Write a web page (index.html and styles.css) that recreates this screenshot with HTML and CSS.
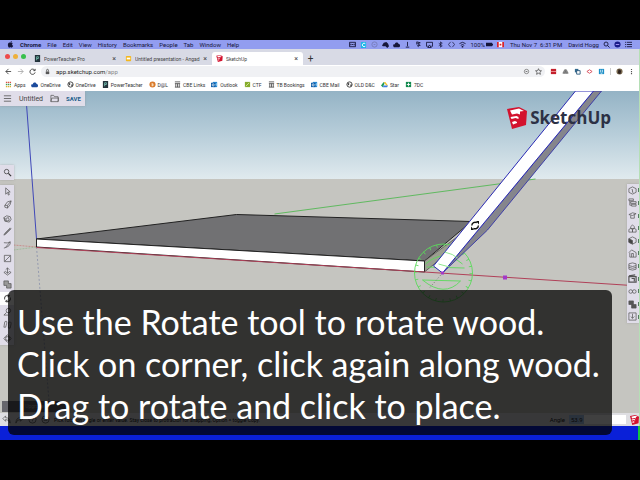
FILE: index.html
```html
<!DOCTYPE html>
<html lang="en">
<head>
<meta charset="utf-8">
<title>SketchUp</title>
<link rel="stylesheet" href="styles.css">
</head>
<body>
<svg class="defs" aria-hidden="true">
  <defs>
    <symbol id="globe" viewBox="0 0 8 8"><circle cx="4" cy="4" r="3" fill="#fff" stroke="#333"/><path d="M2 2l2 1-1 2-1-1zM5 4l2 0-1 2-1 0z" fill="#333"/></symbol>
    <symbol id="outlook" viewBox="0 0 8 8"><path d="M2 1h5v6H2z" fill="#2a8ad4"/><path d="M4 4l3-2v4z" fill="#7cc3f0"/><path d="M0 2h5v5H0z" fill="#0f5ea8"/><circle cx="2.500" cy="4.500" r="1.200" fill="none" stroke="#fff" stroke-width=".8"/></symbol>
    <symbol id="power" viewBox="0 0 8 8"><path d="M1 0h6v8H1z" fill="#24333c"/><path d="M3 6V2h2v2H3" fill="none" stroke="#6fb7a8"/></symbol>
    <symbol id="bank" viewBox="0 0 8 8"><path d="M1 1h6M1 3h6M2 3v4M4 3v4M6 3v4M1 7h6" fill="none" stroke="#555"/></symbol>
    <symbol id="brand" viewBox="0 0 20 22"><path d="M0 2L12 0l8 4-1 14L5 22z" fill="#d3122e"/><path d="M3 3.500L12 1.500l5 2.500-4 .5v3l-3-1L5 7.500z" fill="#fff"/><path d="M3.500 10l6-1 2 1v2l-3-1-4 1zM5 15l3-1 2 1v1l-4 1.500z" fill="#fff"/></symbol>
  </defs>
</svg>
<div class="screen">
  <header class="menubar">
    <nav class="menus">
      <svg class="glyph" viewBox="0 0 8 8"><path d="M4 2C2 1 1 3 1 4.500 1 6 2 8 3 7.500c1-.4 1-.4 2 0C6 8 7 6 7 5.500 5.500 5 5.500 3.500 6.600 2.700 6 1.700 5 1.700 4 2zM4 1.600C4 .8 4.600 0 5.400 0c0 1-.6 1.600-1.400 1.600z" fill="#16163a"/></svg>
      <b>Chrome</b><span>File</span><span>Edit</span><span>View</span><span>History</span><span>Bookmarks</span><span>People</span><span>Tab</span><span>Window</span><span>Help</span>
    </nav>
    <div class="extras">
      <svg class="glyph" viewBox="0 0 8 8"><path d="M.5 1.500h7v5h-7zM3 4h2M2 3v2M6 3v2" fill="none" stroke="#16163a"/></svg>
      <svg class="glyph" viewBox="0 0 8 8"><rect x="1" y="1" width="6" height="7" rx="1" fill="#1cb6e8"/><path d="M6 3a2 2 0 1 0 0 3" fill="none" stroke="#fff"/></svg>
      <svg class="glyph" viewBox="0 0 8 8"><circle cx="4" cy="4" r="3" fill="none" stroke="#777bb8"/><path d="M3 4h2" stroke="#777bb8"/></svg>
      <svg class="glyph" viewBox="0 0 8 8"><path d="M0 5l2-3 3-1 2 2 1 3-2 2-2-2H1z" fill="#16163a"/></svg>
      <svg class="glyph" viewBox="0 0 8 8"><path d="M1 7C-1 5 1 3 2 4c0-3 4-3 4-1 2 0 3 3 1 4z" fill="#16163a"/></svg>
      <svg class="glyph" viewBox="0 0 8 8"><path d="M4 1v5M2 7h4" stroke="#16163a" fill="none"/></svg>
      <svg class="glyph" viewBox="0 0 8 8"><path d="M2 1l4 1-3 1 3 2-3 0 1 2M2 1v3" stroke="#16163a" fill="none"/></svg>
      <svg class="glyph" viewBox="0 0 8 8"><path d="M2 6H.5V1.500h7V6H6M4 4.500L6 7.500H2z" stroke="#16163a" fill="none"/></svg>
      <svg class="glyph" viewBox="0 0 8 8"><path d="M2 2.500l4 3L4 7V1l2 1.500-4 3" stroke="#16163a" fill="none" stroke-width=".8"/></svg>
      <svg class="glyph" viewBox="0 0 8 8"><path d="M3 1L.5 4 3 7M5 1l2.500 3L5 7" stroke="#16163a" fill="none" stroke-width=".8"/></svg>
      <svg class="glyph" viewBox="0 0 8 8"><path d="M.5 3q3.500-3 7 0M2 5q2-2 4 0" stroke="#16163a" fill="none"/><circle cx="4" cy="6.500" r="1" fill="#16163a"/></svg>
      <span class="battery">100%<svg class="glyph" viewBox="0 0 8 8"><path d="M0 2h7v4H0zM7 3h1v2H7z" fill="#16163a"/></svg></span>
      <svg class="glyph" viewBox="0 0 8 8"><path d="M0 1h8v6H0z" fill="#fff"/><path d="M0 1h2v6H0zM6 1h2v6H6zM3 3h2v2H3z" fill="#d9232e"/></svg>
      <span class="clock">Thu Nov 7&nbsp; 6:31 PM</span><span>David Hogg</span>
      <svg class="glyph" viewBox="0 0 8 8"><circle cx="3.500" cy="3.500" r="2.300" stroke="#16163a" fill="none"/><path d="M5 5l2.500 2.500" stroke="#16163a"/></svg>
      <svg class="glyph" viewBox="0 0 8 8"><circle cx="4" cy="4" r="3.500" fill="#1a1c8a"/><path d="M2 4h4" stroke="#b0a0ff"/></svg>
      <svg class="glyph" viewBox="0 0 8 8"><path d="M0 1.500h1M2 1.500h6M0 4h1M2 4h6M0 6.500h1M2 6.500h6" stroke="#16163a"/></svg>
    </div>
  </header>

  <section class="browser">
    <div class="tabs">
      <div class="lights"><i class="red"></i><i class="amber"></i><i class="green"></i></div>
      <div class="tab"><svg class="glyph"><use href="#power"/></svg><span>PowerTeacher Pro</span><button aria-label="Close tab">×</button></div>
      <div class="tab"><svg class="glyph" viewBox="0 0 8 8"><rect x="1" y="1" width="6" height="6" rx="1" fill="#f4b71e"/><path d="M2 3h4v2H2z" fill="#fff"/></svg><span>Untitled presentation - Angad S</span><button aria-label="Close tab">×</button></div>
      <div class="tab current"><svg class="glyph"><use href="#brand"/></svg><span>SketchUp</span><button aria-label="Close tab">×</button></div>
      <button class="plus" aria-label="New tab">+</button>
    </div>
    <div class="address">
      <button aria-label="Back"><svg class="glyph" viewBox="0 0 8 8"><path d="M7 4H1M4 1L1 4l3 3" stroke="#444" fill="none"/></svg></button>
      <button aria-label="Forward"><svg class="glyph" viewBox="0 0 8 8"><path d="M1 4h6M4 1l3 3-3 3" stroke="#aaa" fill="none"/></svg></button>
      <button aria-label="Reload"><svg class="glyph" viewBox="0 0 8 8"><path d="M6.500 2.500A3 3 0 1 0 7 5M7 1v2H5" stroke="#333" fill="none"/></svg></button>
      <div class="urlbox">
        <svg class="glyph" viewBox="0 0 8 8"><path d="M2 4h4v3H2z" fill="#555"/><path d="M3 4V2.500a1 1 0 0 1 2 0V4" stroke="#555" fill="none"/></svg>
        <span class="url">app.sketchup.com<em>/app</em></span>
        <svg class="glyph" viewBox="0 0 8 8"><circle cx="4" cy="4" r="2.500" stroke="#666" fill="none" stroke-width=".8"/><path d="M3 4h2" stroke="#666"/></svg>
        <svg class="glyph" viewBox="0 0 8 8"><path d="M4 .8l1 2.200 2.400.2-1.800 1.600.6 2.400L4 6 1.800 7.200l.6-2.400L.6 3.200 3 3z" stroke="#444" fill="none" stroke-width=".8"/></svg>
      </div>
      <div class="extensions">
        <svg class="glyph" viewBox="0 0 8 8"><path d="M1 1h6v6H1z" fill="#c4202d"/><path d="M1 4h6" stroke="#e99"/></svg>
        <svg class="glyph" viewBox="0 0 8 8"><path d="M1 6l2-4h2l2 4zM3 6l1-3 1 3" fill="#999" stroke="#666" stroke-width=".8"/></svg>
        <svg class="glyph" viewBox="0 0 8 8"><path d="M1 1h4v4H1z" fill="#31688d"/><path d="M3 3h4v4H3z" fill="#fff" stroke="#25567c"/></svg>
        <svg class="glyph" viewBox="0 0 8 8"><path d="M1 4l3-2 3 2-3 2z" fill="#fff" stroke="#d64552"/></svg>
        <svg class="glyph" viewBox="0 0 8 8"><path d="M1 1h6v6H1z" fill="#1e90c8"/><path d="M3 2v3M5 2v3M3 6h2" stroke="#fff" stroke-width=".8"/></svg>
        <i class="rule"></i>
        <svg class="glyph" viewBox="0 0 8 8"><circle cx="4" cy="4" r="3.500" fill="#7a6a50"/><path d="M3 1l3 2-1 4-3-1z" fill="#30241e"/></svg>
        <svg class="glyph" viewBox="0 0 8 8"><path d="M4 1v1.400M4 3.400v1.400M4 5.800v1.400" stroke="#555" stroke-width="1.300"/></svg>
      </div>
    </div>
    <nav class="bookmarks">
      <a href="#"><svg class="glyph" viewBox="0 0 8 8"><path d="M1 1.500h6" stroke="#d95040" stroke-width="1.500" stroke-dasharray="1.500 .7"/><path d="M1 4h6" stroke="#4a9a55" stroke-width="1.500" stroke-dasharray="1.500 .7"/><path d="M1 6.500h6" stroke="#e0b030" stroke-width="1.500" stroke-dasharray="1.500 .7"/></svg>Apps</a>
      <a href="#"><svg class="glyph" viewBox="0 0 8 8"><path d="M1 7C-1 5 1 3 2 4c0-3 4-3 4-1 2 0 3 3 1 4z" fill="#1b4a9c"/></svg>OneDrive</a>
      <a href="#"><svg class="glyph"><use href="#globe"/></svg>OneDrive</a>
      <a href="#"><svg class="glyph"><use href="#power"/></svg>PowerTeacher</a>
      <a href="#"><svg class="glyph" viewBox="0 0 8 8"><circle cx="4" cy="4" r="3.500" fill="#d97a2b"/><path d="M3 2v4q3 0 2-3z" fill="#f8d9b5"/></svg>D@L</a>
      <a href="#"><svg class="glyph"><use href="#bank"/></svg>CBE Links</a>
      <a href="#"><svg class="glyph"><use href="#outlook"/></svg>Outlook</a>
      <a href="#"><svg class="glyph" viewBox="0 0 8 8"><path d="M1 1h6v6H1z" fill="#86ac2c"/><path d="M2 6l4-4" stroke="#d8e8a0"/></svg>CTF</a>
      <a href="#"><svg class="glyph"><use href="#bank"/></svg>TB Bookings</a>
      <a href="#"><svg class="glyph"><use href="#outlook"/></svg>CBE Mail</a>
      <a href="#"><svg class="glyph"><use href="#globe"/></svg>OLD D&amp;C</a>
      <a href="#"><svg class="glyph" viewBox="0 0 8 8"><path d="M3 1h2l3 4H6z" fill="#f5c32c"/><path d="M3 1l1 2-2 4-2-2z" fill="#209a5c"/><path d="M3 5h5L7 7H2z" fill="#3d7de0"/></svg>Star</a>
      <a href="#"><svg class="glyph" viewBox="0 0 8 8"><path d="M1 1h6v6H1z" fill="#128a4e"/><path d="M2 4h4M4 2v4" stroke="#fff"/></svg>7DC</a>
    </nav>

    <main class="app">
      <svg class="scene" viewBox="0 91 640 322" preserveAspectRatio="xMidYMid slice" aria-label="Model">
        <defs><linearGradient id="sky" x1="0" y1="0" x2="0" y2="1"><stop offset="0" stop-color="#94b3c5"/><stop offset=".5" stop-color="#b8ceda"/><stop offset="1" stop-color="#e0eaee"/></linearGradient></defs>
        <path d="M0 91h640v88H0z" fill="url(#sky)"/>
        <path d="M0 179h640v234H0z" fill="#c5c5c0"/>
        <path d="M26 91L37 239" stroke="#4048b8" fill="none"/>
        <path d="M37 247l13 160" stroke="#8088a8" stroke-dasharray="2 2" fill="none" stroke-width=".7"/>
        <path d="M14 245l23 2" stroke="#c87878" stroke-dasharray="2 1" stroke-width=".7"/>
        <path d="M14 250l23-3" stroke="#8fb88f" stroke-dasharray="2 1" stroke-width=".7"/>
        <path d="M275 214l261-35" stroke="#55b855" stroke-width=".9"/>
        <path d="M37 239L237 214.500 472 221.500 425 261z" fill="#717173" stroke="#222"/>
        <path d="M425 261l34-25v8l-34 28z" fill="#9b9e90" stroke="#444" stroke-width=".7"/>
        <path d="M37 239l388 22v11L37 247z" fill="#fff" stroke="#222"/>
        <path d="M37 247.500l388 24.500 215 14" stroke="#b04058" fill="none"/>
        <g fill="none" stroke="#5bd95b" stroke-width=".9">
          <circle cx="444" cy="273" r="29"/>
          <circle cx="444" cy="273" r="27.500" stroke-dasharray=".8 6.400" stroke-width="3"/>
          <path d="M426 264q18-16 37 0M423 280l38 1q-16 17-38-1M427 267l38 1"/>
        </g>
        <path d="M594 91h8L488 230l-45 43z" fill="#85858c" stroke="#3434a8" stroke-width=".9"/>
        <path d="M576 91h18L443 273l-9-7z" fill="#fff" stroke="#2a2ab4"/>
        <path d="M439 264l11 3M445 252q9 2 13 6" stroke="#8fe88f" fill="none"/>
        <path d="M443 273l-13 15" stroke="#777" stroke-dasharray="1 2"/>
        <path d="M503.500 275.500h4v4h-4zM441.500 271.500h3v3h-3z" fill="#a338c8"/>
        <path d="M472.300 225.500a3.300 3.300 0 0 1 5-2.800M478.900 225.500a3.300 3.300 0 0 1-5 2.800" fill="none" stroke="#111" stroke-width="1.400"/>
        <path d="M476.500 221h3v3.500zM474.500 230h-3v-3.500z" fill="#111"/>
      </svg>
      <div class="logo"><svg viewBox="0 0 20 22"><use href="#brand"/></svg><span>SketchUp</span></div>
      <div class="filebar">
        <button aria-label="Menu"><svg class="icon" viewBox="0 0 10 10"><path d="M1 2h8M1 5h8M1 8h8" stroke="#555" stroke-width=".9"/></svg></button>
        <span class="title">Untitled</span>
        <button aria-label="Open"><svg class="icon" viewBox="0 0 10 10"><path d="M1 8.500v-7h3l1 1.500h4v5.500zM1 8.500l1-4h8l-1 4" fill="none" stroke="#555" stroke-width=".8"/></svg></button>
        <button class="save">SAVE</button>
      </div>
      <div class="search"><button aria-label="Search"><svg class="icon" viewBox="0 0 10 10"><circle cx="4" cy="4" r="2.500" fill="none" stroke="#333"/><path d="M6 6l3 3" stroke="#333" stroke-width="1.300"/></svg></button></div>
      <div class="tools">
        <button aria-label="Select"><svg class="icon" viewBox="0 0 10 10"><path d="M3 1v7l2-2 1 3 1-.5L6 5.500h2z"/></svg></button>
        <button aria-label="Eraser"><svg class="icon" viewBox="0 0 10 10"><path d="M2 6l3-4 4-1-1 4-3 4-3-1zM2 6l3 0 4-5M5 6v3"/></svg></button>
        <button aria-label="Paint"><svg class="icon" viewBox="0 0 10 10"><path d="M1 4l3-2 4 1 1 3-2 3-5-1zM3 5l3-1 1 3-3 1zM1 4l2 4"/></svg></button>
        <button aria-label="Line"><svg class="icon" viewBox="0 0 10 10"><path d="M1 9l1-2 6-6 1 1-6 6zM2 8l6-6"/></svg></button>
        <button aria-label="Arc"><svg class="icon" viewBox="0 0 10 10"><path d="M1 3q4 1 7-1 1 5-7 7M3 8l5-6"/></svg></button>
        <button aria-label="Rectangle"><svg class="icon" viewBox="0 0 10 10"><path d="M1.500 1.500h7v7h-7zM2 8l6-6"/></svg></button>
        <button aria-label="Push pull"><svg class="icon" viewBox="0 0 10 10"><path d="M3 5L1 6l4 3 4-3-2-1M5 7V1M3 3l2-2 2 2M3 5l2 2 2-2"/></svg></button>
        <button aria-label="Offset"><svg class="icon" viewBox="0 0 10 10"><path d="M1 1h5v3h3v5H4V6H1z" fill="#999"/></svg></button>
        <button class="active" aria-label="Rotate"><svg class="icon" viewBox="0 0 10 10"><path d="M2 6a3 3 0 0 1 4-4M8 4a3 3 0 0 1-4 4M5 .8L7 2 5 3.500M5 9.200L3 8l2-1.500" stroke-width="1.200"/></svg></button>
        <button aria-label="Tape"><svg class="icon" viewBox="0 0 10 10"><circle cx="6" cy="4" r="2.500"/><path d="M4 6L1 9h5"/></svg></button>
        <button aria-label="Walk"><svg class="icon" viewBox="0 0 10 10"><path d="M2 2q3-2 2 2l-1 4H1zM6 3q3-2 3 1L8 9H6z"/></svg></button>
        <button aria-label="Orbit"><svg class="icon" viewBox="0 0 10 10"><ellipse cx="5" cy="5" rx="4" ry="2"/><ellipse cx="5" cy="5" rx="2" ry="4"/></svg></button>
      </div>
      <div class="panels">
        <button aria-label="Entity info"><svg class="icon" viewBox="0 0 10 10"><path d="M5 1l4 2v4L5 9 1 7V3zM4 4h1v3h1"/></svg></button>
        <button aria-label="Instructor"><svg class="icon" viewBox="0 0 10 10"><path d="M1 1h5v2H1zM3 4h6v2H3zM4 7h5v2H4zM2 3v5h2"/></svg></button>
        <button aria-label="Materials"><svg class="icon" viewBox="0 0 10 10"><path d="M1 4l4-2 4 1-4 2zM3 5v3l4 0V4"/></svg></button>
        <button aria-label="Components"><svg class="icon" viewBox="0 0 10 10"><path d="M3 3l2-2 2 2v2H3zM1 6l2-1 2 1v3H1zM5 6l2-1 2 1v3H5z"/></svg></button>
        <button aria-label="Styles"><svg class="icon" viewBox="0 0 10 10"><path d="M5 1l4 2v4L5 9 1 7V3z"/><path d="M1 3l4 2v4L1 7z" fill="#444"/></svg></button>
        <button aria-label="Views"><svg class="icon" viewBox="0 0 10 10"><path d="M1 4l3-3 5 3v5H2V4M4 9V5h2v4"/></svg></button>
        <button aria-label="Layers"><svg class="icon" viewBox="0 0 10 10"><path d="M1 2l4-1 4 1v6L5 9 1 8zM1 4l4 1 4-1M1 6l4 1 4-1"/></svg></button>
        <button aria-label="Scenes"><svg class="icon" viewBox="0 0 10 10"><path d="M1 3h8v6H1zM1 2l7-1M4 5h3v3" stroke-width="1.300"/></svg></button>
        <button aria-label="Display"><svg class="icon" viewBox="0 0 10 10"><circle cx="3" cy="5" r="2"/><circle cx="7" cy="5" r="2"/></svg></button>
        <button aria-label="Soften"><svg class="icon" viewBox="0 0 10 10"><path d="M1 1h5v4H1zM4 5h5v4H4z" fill="#555"/></svg></button>
        <button aria-label="Model info"><svg class="icon" viewBox="0 0 10 10"><path d="M1 1h8v8H1zM5 2v5M3 5l2 2 2-2"/></svg></button>
      </div>
      <div class="toast">Upgrade</div>
    </main>

    <footer class="status">
      <button aria-label="Undo"><svg class="icon" viewBox="0 0 10 10"><path d="M4 1L1 4l3 3V5q4 0 5 4 0-6-5-6z"/></svg></button>
      <button aria-label="Redo"><svg class="icon" viewBox="0 0 10 10"><path d="M6 1l3 3-3 3V5Q2 5 1 9q0-6 5-6z"/></svg></button>
      <button aria-label="Help"><svg class="icon" viewBox="0 0 10 10"><circle cx="5" cy="5" r="4"/><path d="M4 4q1-2 2 0L5 6v1"/></svg></button>
      <button aria-label="Language"><svg class="icon" viewBox="0 0 10 10"><circle cx="5" cy="5" r="4"/><path d="M1 4h8M3 6h4"/></svg></button>
      <span class="hint">Pick rotation angle or enter value. Stay close to protractor for snapping, Option = toggle Copy.</span>
      <label for="angle">Angle</label>
      <input id="angle" value="53.9">
      <svg class="badge" viewBox="0 0 20 22"><use href="#brand"/></svg>
    </footer>
  </section>
  <p class="caption">Use the Rotate tool to rotate wood.<br>Click on corner, click again along wood.<br>Drag to rotate and click to place.</p>
</div>
</body>
</html>
```
FILE: styles.css
```css
* { box-sizing: border-box; }
body {
  margin: 0;
  min-height: 100vh;
  padding: 40px 0;
  background: #000;
  color: #333;
  font: 6px/8px Roboto, "Liberation Sans", sans-serif;
  display: flex;
  flex-direction: column;
}
button {
  border: 0;
  padding: 0;
  background: none;
  color: inherit;
  font: inherit;
  display: flex;
  align-items: center;
  justify-content: center;
}
a { color: inherit; text-decoration: none; }
.defs { position: absolute; width: 0; height: 0; }
.glyph { width: 7px; height: 7px; flex: none; display: block; }
.icon { width: 9px; height: 9px; flex: none; display: block; fill: none; stroke: #555; stroke-width: .8px; }

.screen {
  flex: 1;
  position: relative;
  display: flex;
  flex-direction: column;
  background: linear-gradient(to left, #14c83c 2px, #0a20d8 2px);
  padding-bottom: 14px;
}
.menubar {
  display: flex;
  justify-content: space-between;
  height: 9px;
  padding: 0 8px 0 7px;
  background: #929df0;
  color: #16163a;
}
.menus, .extras { display: flex; align-items: center; gap: 6px; }
.extras { gap: 4px; }
.battery { display: flex; gap: 1px; }
.clock { padding: 0 2px; }

.browser {
  flex: 1;
  display: flex;
  flex-direction: column;
  background: #d8dae5;
  border-right: 1px solid #b5dfb5;
}
.tabs {
  display: flex;
  align-items: flex-end;
  height: 16px;
  font-size: 5px;
}
.lights { display: flex; gap: 3px; width: 30px; padding: 0 0 6px 5px; }
.lights i { width: 5px; height: 5px; border-radius: 50%; }
.red { background: #ee4b4b; }
.amber { background: #eeb03a; }
.green { background: #38c04c; }
.tab {
  flex: 0 0 91px;
  min-width: 0;
  display: flex;
  align-items: center;
  gap: 3px;
  height: 13px;
  padding: 0 5px 0 4px;
  color: #444;
}
.tab span { flex: 1; overflow: hidden; white-space: nowrap; }
.tab button { font-size: 7px; }
.current { background: #fff; border-radius: 3px 3px 0 0; }
.plus { width: 15px; height: 13px; font-size: 10px; }
.address {
  display: flex;
  align-items: center;
  gap: 5px;
  height: 13px;
  padding: 0 4px 0 5px;
  background: #fff;
}
.urlbox {
  flex: 1;
  display: flex;
  align-items: center;
  gap: 5px;
  height: 11px;
  padding: 0 3px;
  border-radius: 6px;
  background: #f0f1f4;
}
.url { flex: 1; color: #222; }
.url em { font-style: normal; color: #888; }
.extensions { display: flex; align-items: center; gap: 5px; }
.rule { width: 1px; height: 7px; background: #ccc; }
.bookmarks {
  display: flex;
  align-items: center;
  gap: 6px;
  height: 13px;
  padding-left: 5px;
  background: #fff;
  font-size: 5px;
}
.bookmarks a { display: flex; align-items: center; gap: 2px; white-space: nowrap; }

.app { flex: 1; position: relative; overflow: hidden; background: #c5c5c0; }
.scene { position: absolute; inset: 0; width: 100%; height: 100%; }
.logo {
  position: absolute;
  top: 15px;
  right: 28px;
  display: flex;
  align-items: center;
  gap: 3px;
  color: #2c3145;
  font: bold 17px/24px "Open Sans", sans-serif;
}
.logo svg { width: 20px; height: 22px; }
.filebar, .search, .tools, .panels { position: absolute; background: #e0dde9; box-shadow: 0 0 2px #8888; }
.filebar {
  top: 0;
  left: 0;
  display: flex;
  align-items: center;
  gap: 7px;
  height: 15px;
  padding: 0 4px 0 3px;
}
.title { font-size: 7px; color: #444; }
.save { color: #1c5d8c; font-weight: bold; }
.search { top: 74px; left: 0; width: 14px; height: 15px; display: grid; }
.tools { top: 94px; left: 0; width: 14px; height: 160px; display: grid; }
.active { background: #fff; }
.panels { top: 93px; right: 0; width: 12px; height: 139px; display: grid; padding-left: 1px; }
.panels button { justify-content: space-between; }
.panels button::after { content: ""; width: 1px; height: 4px; background: #567a60; }
.toast {
  position: absolute;
  left: 2px;
  bottom: 1px;
  width: 65px;
  height: 11px;
  background: #66666c;
  color: #aaa;
  font-size: 5px;
  line-height: 11px;
  text-align: center;
}

.status {
  display: flex;
  align-items: center;
  gap: 4px;
  height: 13px;
  padding-left: 2px;
  background: #dedee2;
  color: #222;
}
.status button { width: 9px; }
.hint { flex: 1; font-size: 5px; white-space: nowrap; }
.status input {
  width: 57px;
  height: 9px;
  border: 0;
  padding: 0 2px;
  background: linear-gradient(to right, #a9c6ee 15px, #fff 15px);
  color: #222;
  font: inherit;
}
.badge { width: 9px; height: 10px; }
.caption {
  position: absolute;
  top: 250px;
  left: 8px;
  right: 28px;
  margin: 0;
  padding: 11px 9px 8px;
  border-radius: 6px;
  background: rgba(0, 0, 0, .75);
  color: #fff;
  font: 34px/42px Lato, sans-serif;
  white-space: nowrap;
}
```
